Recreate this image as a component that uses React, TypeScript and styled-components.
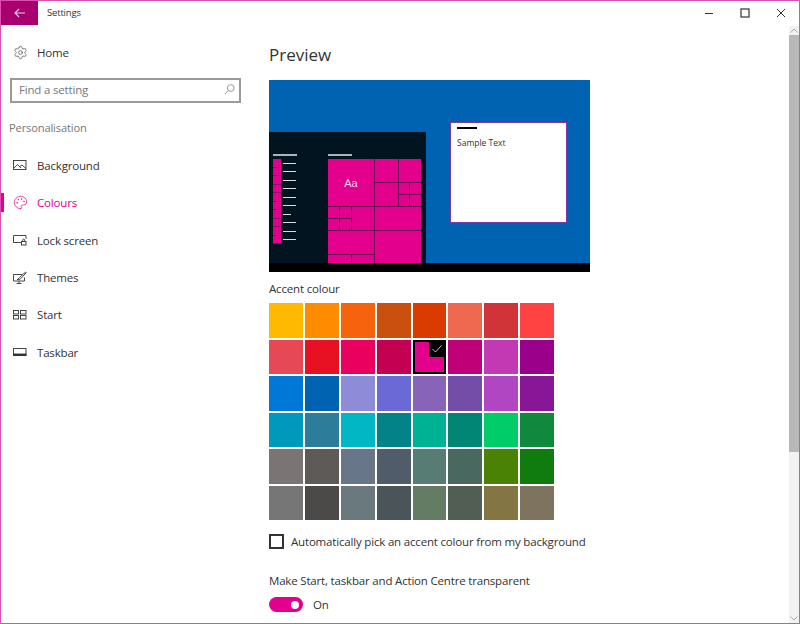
import styled, { createGlobalStyle } from "styled-components";
import { Palette, Settings } from "lucide-react";

const ACCENT = "#e3008c";

const swatches = [
  "#ffb900", "#ff8c00", "#f7630c", "#ca5010", "#da3b01", "#ef6950", "#d13438", "#ff4343",
  "#e74856", "#e81123", "#ea005e", "#c30052", "#e3008c", "#bf0077", "#c239b3", "#9a0089",
  "#0078d7", "#0063b1", "#8e8cd8", "#6b69d6", "#8764b8", "#744da9", "#b146c2", "#881798",
  "#0099bc", "#2d7d9a", "#00b7c3", "#038387", "#00b294", "#018574", "#00cc6a", "#10893e",
  "#7a7574", "#5d5a58", "#68768a", "#515c6b", "#567c73", "#486860", "#498205", "#107c10",
  "#767676", "#4c4a48", "#69797e", "#4a5459", "#647c64", "#525e54", "#847545", "#7e735f",
];

// col, row, col span, row span
const tiles = [
  [1, 1, 4, 4], [5, 1, 2, 2], [7, 1, 2, 2], [5, 3, 2, 2], [7, 3, 1, 1], [8, 3, 1, 1],
  [7, 4, 1, 1], [8, 4, 1, 1], [1, 5, 1, 1], [2, 5, 1, 1], [1, 6, 1, 1], [2, 6, 1, 1],
  [3, 5, 2, 2], [5, 5, 4, 2], [1, 7, 4, 2], [5, 7, 4, 3], [1, 9, 2, 1], [3, 9, 2, 1],
];

const appLines = [1, 1, 1, 1, 1, 1, 0, 1, 1, 1];

const BackgroundIcon = () => (
  <svg width="14" height="12" viewBox="0 0 14 12" fill="none" stroke="currentColor" strokeWidth="0.9">
    <rect x="0.5" y="1.5" width="12.5" height="9" />
    <path d="M1 9l3.500-3.500L8 9M7 7.500l2-1.500 4 3.500" />
  </svg>
);

const LockIcon = () => (
  <svg width="14" height="12" viewBox="0 0 14 12" fill="none" stroke="currentColor" strokeWidth="0.9">
    <path d="M8 8.500H0.500V1.500h12.500v3.500" />
    <rect x="8.500" y="7.500" width="4.500" height="3.500" />
    <path d="M9.700 7.500V6.200a1 1 0 0 1 2 0v1.300" />
  </svg>
);

const ThemesIcon = () => (
  <svg width="14" height="13" viewBox="0 0 14 13" fill="none" stroke="currentColor" strokeWidth="0.9">
    <path d="M9 3.500H0.500v6.500h11V6.500M6 10v2M3.500 12.500h5" />
    <path d="M4 8.500c1.500-.2 1.500-1.500 2.500-2L12.500 1l.7.7-5.500 6c-.8.900-2.200 1-3.700.8z" />
  </svg>
);

const StartIcon = () => (
  <svg width="14" height="12" viewBox="0 0 14 12" fill="none" stroke="currentColor" strokeWidth="0.9">
    <rect x="0.5" y="1.500" width="5" height="3.500" />
    <rect x="7.500" y="1.500" width="5.500" height="3.500" />
    <rect x="0.5" y="6.500" width="5" height="3.500" />
    <rect x="7.500" y="6.500" width="5.500" height="3.500" />
  </svg>
);

const TaskbarIcon = () => (
  <svg width="14" height="12" viewBox="0 0 14 12" fill="none" stroke="currentColor" strokeWidth="0.9">
    <rect x="0.5" y="2.500" width="12.5" height="7" />
    <rect x="0.5" y="8" width="12.5" height="1.500" fill="currentColor" />
  </svg>
);

const SearchIcon = () => (
  <svg width="11" height="11" viewBox="0 0 11 11" fill="none" stroke="#999">
    <circle cx="6.800" cy="4" r="3.400" />
    <path d="M4.300 6.500L1 10" />
  </svg>
);

const navItems = [
  { label: "Background", icon: <BackgroundIcon /> },
  { label: "Colours", icon: <Palette size={15} strokeWidth={1.1} />, active: true },
  { label: "Lock screen", icon: <LockIcon /> },
  { label: "Themes", icon: <ThemesIcon /> },
  { label: "Start", icon: <StartIcon /> },
  { label: "Taskbar", icon: <TaskbarIcon /> },
];

export default function App() {
  return (
    <>
      <GlobalStyle />
      <Window>
        <TitleBar>
          <BackButton aria-label="Back">
            <svg width="12" height="10" viewBox="0 0 12 10" fill="none" stroke="#f7c6e6" strokeWidth="1.200">
              <path d="M11 5H1M5 1L1 5l4 4" />
            </svg>
          </BackButton>
          <WindowTitle>Settings</WindowTitle>
          <Controls>
            <Control>
              <svg width="10" height="10" viewBox="0 0 10 10" stroke="#333" fill="none">
                <path d="M1 5.500h8" />
              </svg>
            </Control>
            <Control>
              <svg width="10" height="10" viewBox="0 0 10 10" stroke="#333" fill="none">
                <rect x="1" y="1" width="8" height="8" strokeWidth="1.200" />
              </svg>
            </Control>
            <Control>
              <svg width="10" height="10" viewBox="0 0 10 10" stroke="#333" fill="none">
                <path d="M1 1l8 8M9 1l-8 8" />
              </svg>
            </Control>
          </Controls>
        </TitleBar>
        <Body>
          <Sidebar>
            <NavItem>
              <NavIcon>
                <Settings size={15} strokeWidth={1} />
              </NavIcon>
              Home
            </NavItem>
            <SearchBox>
              Find a setting
              <SearchIcon />
            </SearchBox>
            <SectionLabel>Personalisation</SectionLabel>
            {navItems.map((item) => (
              <NavItem key={item.label} $active={item.active}>
                {item.active && <ActiveBar />}
                <NavIcon>{item.icon}</NavIcon>
                {item.label}
              </NavItem>
            ))}
          </Sidebar>
          <Main>
            <Heading>Preview</Heading>
            <PreviewFrame>
              <Desktop>
                <StartPanel>
                  <AppList>
                    <ListHeader />
                    {appLines.map((full, i) => (
                      <AppRow key={i}>
                        <AppIcon />
                        <AppLine $short={!full} />
                      </AppRow>
                    ))}
                  </AppList>
                  <TileColumn>
                    <ListHeader />
                    <TileGrid>
                      {tiles.map(([c, r, cs, rs], i) => (
                        <Tile key={i} $c={c} $r={r} $cs={cs} $rs={rs}>
                          {i === 0 && "Aa"}
                        </Tile>
                      ))}
                    </TileGrid>
                  </TileColumn>
                </StartPanel>
                <SampleWindow>
                  <SampleBar />
                  Sample Text
                </SampleWindow>
              </Desktop>
              <PreviewTaskbar />
            </PreviewFrame>
            <Label>Accent colour</Label>
            <SwatchGrid>
              {swatches.map((color, i) => (
                <Swatch key={i} $color={color} $selected={color === ACCENT}>
                  {color === ACCENT && (
                    <CheckMark>
                      <svg width="10" height="8" viewBox="0 0 10 8" fill="none" stroke="#c4c4c4">
                        <path d="M0.500 4l3 3 6-6.500" />
                      </svg>
                    </CheckMark>
                  )}
                </Swatch>
              ))}
            </SwatchGrid>
            <CheckRow>
              <CheckBox />
              Automatically pick an accent colour from my background
            </CheckRow>
            <TransparentLabel>Make Start, taskbar and Action Centre transparent</TransparentLabel>
            <ToggleRow>
              <Toggle>
                <Knob />
              </Toggle>
              On
            </ToggleRow>
          </Main>
          <ScrollBar>
            <ScrollArrow>
              <svg width="8" height="5" viewBox="0 0 8 5" fill="none" stroke="#aaa">
                <path d="M0.5 4.500L4 1l3.500 3.500" />
              </svg>
            </ScrollArrow>
            <ScrollThumb />
            <ScrollArrow>
              <svg width="8" height="5" viewBox="0 0 8 5" fill="none" stroke="#aaa">
                <path d="M0.5 0.500L4 4l3.500-3.500" />
              </svg>
            </ScrollArrow>
          </ScrollBar>
        </Body>
      </Window>
    </>
  );
}

const GlobalStyle = createGlobalStyle`
  html, body {
    margin: 0;
    padding: 0;
    background: #fff;
  }
  * {
    box-sizing: border-box;
  }
  body {
    font-family: "Open Sans", "Noto Sans", sans-serif;
    font-size: 11.5px;
    letter-spacing: -0.18px;
    color: #333;
  }
`;

const Window = styled.div`
  width: 800px;
  height: 624px;
  border: 1px solid #dc4fb0;
  display: flex;
  flex-direction: column;
  overflow: hidden;
  background: #fff;
`;

const TitleBar = styled.div`
  height: 24px;
  display: flex;
  align-items: center;
  flex-shrink: 0;
`;

const BackButton = styled.div`
  width: 37px;
  height: 24px;
  background: #a8006f;
  display: flex;
  align-items: center;
  justify-content: center;
`;

const WindowTitle = styled.div`
  margin-left: 9px;
  font-size: 9.5px;
  margin-top: -1px;
`;

const Controls = styled.div`
  margin-left: auto;
  display: flex;
`;

const Control = styled.div`
  width: 36px;
  height: 24px;
  display: flex;
  align-items: center;
  justify-content: center;
`;

const Body = styled.div`
  flex: 1;
  display: flex;
  min-height: 0;
`;

const Sidebar = styled.nav`
  width: 268px;
  flex-shrink: 0;
  padding-top: 9px;
  display: flex;
  flex-direction: column;
`;

const NavItem = styled.div<{ $active?: boolean }>`
  position: relative;
  height: 37.4px;
  flex-shrink: 0;
  display: flex;
  align-items: center;
  padding-left: 12px;
  color: ${(props) => (props.$active ? ACCENT : "#333")};
`;

const NavIcon = styled.span`
  width: 24px;
  display: flex;
  align-items: center;
`;

const ActiveBar = styled.span`
  position: absolute;
  left: 0;
  top: 9px;
  width: 3px;
  height: 19px;
  background: ${ACCENT};
`;

const SearchBox = styled.div`
  margin: 7px 0 0 9px;
  width: 231px;
  height: 25px;
  border: 2px solid #999;
  padding: 0 4px 2px 7px;
  display: flex;
  align-items: center;
  justify-content: space-between;
  color: #777;
`;

const SectionLabel = styled.div`
  margin: 15px 0 8.3px 8px;
  height: 20px;
  line-height: 20px;
  font-size: 11.2px;
  color: #777;
`;

const Main = styled.main`
  flex: 1;
  min-width: 0;
  display: flex;
  flex-direction: column;
  align-items: flex-start;
`;

const Heading = styled.h1`
  margin: 17px 0 0;
  height: 38px;
  line-height: 26px;
  font-size: 17px;
  font-weight: 400;
  letter-spacing: 0;
`;

const PreviewFrame = styled.div`
  width: 321px;
  height: 192px;
  display: flex;
  flex-direction: column;
  flex-shrink: 0;
`;

const Desktop = styled.div`
  flex: 1;
  background: #0063b1;
  display: flex;
  align-items: flex-end;
`;

const StartPanel = styled.div`
  width: 157px;
  height: 131px;
  background: #02141f;
  display: flex;
  padding-left: 4px;
`;

const AppList = styled.div`
  width: 55px;
  padding-top: 22px;
  display: flex;
  flex-direction: column;
`;

const ListHeader = styled.div`
  width: 24px;
  height: 2px;
  background: #aeb4b8;
  margin-bottom: 3px;
`;

const AppRow = styled.div`
  height: 8.5px;
  display: flex;
  align-items: center;
  gap: 2px;
`;

const AppIcon = styled.div`
  width: 8px;
  height: 100%;
  background: ${ACCENT};
  border-bottom: 1px solid #8a0660;
`;

const AppLine = styled.div<{ $short?: boolean }>`
  width: ${(props) => (props.$short ? 8 : 13)}px;
  height: 1px;
  background: #d8dcde;
`;

const TileColumn = styled.div`
  padding-top: 22px;
  display: flex;
  flex-direction: column;
`;

const TileGrid = styled.div`
  width: 93px;
  height: 104px;
  display: grid;
  grid-template-columns: repeat(8, 1fr);
  grid-template-rows: repeat(8, 1fr) 8px;
  gap: 1px;
  background: #6b0a55;
`;

const Tile = styled.div<{ $c: number; $r: number; $cs: number; $rs: number }>`
  grid-column: ${(props) => props.$c} / span ${(props) => props.$cs};
  grid-row: ${(props) => props.$r} / span ${(props) => props.$rs};
  background: ${ACCENT};
  display: flex;
  align-items: center;
  justify-content: center;
  font-family: "Liberation Sans", sans-serif;
  font-size: 11px;
  letter-spacing: 0;
  color: #ffd0ee;
`;

const SampleWindow = styled.div`
  align-self: flex-start;
  margin: 42px 0 0 24px;
  width: 117px;
  height: 101px;
  background: #fff;
  border: 1px solid #7d3aa8;
  padding: 4px 6px;
  font-size: 8.5px;
  letter-spacing: 0;
`;

const SampleBar = styled.div`
  width: 20px;
  height: 2px;
  background: #000;
  margin-bottom: 8px;
`;

const PreviewTaskbar = styled.div`
  height: 9px;
  background: #000;
`;

const Label = styled.div`
  margin-top: 9px;
  height: 22px;
  line-height: 16px;
`;

const SwatchGrid = styled.div`
  width: 285px;
  height: 217px;
  display: grid;
  grid-template-columns: repeat(8, 1fr);
  grid-template-rows: repeat(6, 1fr);
  gap: 2px;
  flex-shrink: 0;
`;

const Swatch = styled.div<{ $color: string; $selected?: boolean }>`
  position: relative;
  background: ${(props) => props.$color};
  border: ${(props) => (props.$selected ? "2px solid #000" : "none")};
`;

const CheckMark = styled.div`
  position: absolute;
  top: -1px;
  right: -1px;
  width: 16px;
  height: 16px;
  background: #000;
  display: flex;
  align-items: center;
  justify-content: center;
`;

const CheckRow = styled.div`
  margin-top: 14px;
  display: flex;
  align-items: center;
  gap: 7px;
`;

const CheckBox = styled.div`
  width: 15px;
  height: 15px;
  border: 2px solid #333;
`;

const TransparentLabel = styled.div`
  margin-top: 24px;
`;

const ToggleRow = styled.div`
  margin-top: 9px;
  display: flex;
  align-items: center;
  gap: 10px;
`;

const Toggle = styled.div`
  width: 34px;
  height: 15px;
  border-radius: 8px;
  background: ${ACCENT};
  display: flex;
  align-items: center;
  justify-content: flex-end;
  padding-right: 4px;
`;

const Knob = styled.div`
  width: 8px;
  height: 8px;
  border-radius: 50%;
  background: #fff;
`;

const ScrollBar = styled.div`
  width: 10px;
  flex-shrink: 0;
  margin-top: 1px;
  background: #f2f2f2;
  display: flex;
  flex-direction: column;
`;

const ScrollArrow = styled.div`
  height: 9px;
  display: flex;
  align-items: center;
  justify-content: center;
  flex-shrink: 0;
`;

const ScrollThumb = styled.div`
  height: 417px;
  background: #b8b8b8;
  margin-bottom: auto;
`;
